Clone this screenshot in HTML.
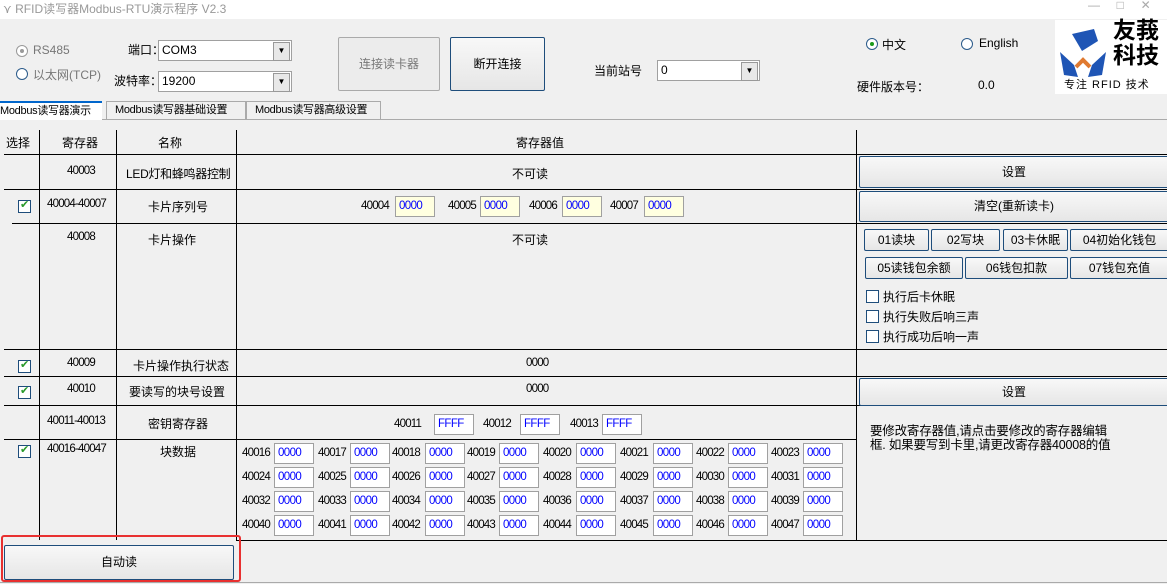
<!DOCTYPE html><html><head><meta charset="utf-8"><style>
*{margin:0;padding:0;box-sizing:border-box}
body{width:1167px;height:584px;overflow:hidden;background:#f0f0f0;font-family:"Liberation Sans","Noto Sans CJK SC",sans-serif;font-size:12px;color:#000;position:relative}
.a{position:absolute;white-space:nowrap}
.n{letter-spacing:-0.8px;font-size:11.5px}
.hl{position:absolute;height:1px;background:#000}
.vl{position:absolute;width:1px;background:#000}
.btn{position:absolute;background:linear-gradient(#f8f8f8,#e6e6e6);border:1px solid #1e4d7b;border-radius:2px;text-align:center;font-size:12px}
.inp{position:absolute;background:#fff;border:1px solid #a0a0a0;color:#00f;padding-left:3px;height:21px;line-height:18px;width:40px;letter-spacing:-0.6px;font-size:11.5px}
.cb{position:absolute;width:13px;height:13px;border:1px solid #1e4d7b;background:#fff}
.cb.on::after{content:"✔";position:absolute;left:1px;top:-3px;color:#2a9a2a;font-size:11px}
.sel{position:absolute;background:#fff;border:1px solid #a0a0a0;height:21px;line-height:19px;padding-left:3px}
.sel::after{content:"▼";position:absolute;right:1px;top:1px;width:15px;height:17px;background:#e8e8e8;border:1px solid #999;font-size:8px;text-align:center;line-height:16px}
.rd{position:absolute;width:12px;height:12px;border:1px solid #2a5a8a;border-radius:50%;background:#fff}
.tab{font-size:11px;letter-spacing:-0.3px}
</style></head><body>
<div class="a" style="left:0;top:0;width:1167px;height:19px;background:#fff"></div>
<div class="a" style="left:3px;top:0;color:#999;font-size:12px">⋎ RFID读写器Modbus-RTU演示程序 V2.3</div>
<div class="a" style="left:1088px;top:-2px;color:#aaa;font-size:12px">—&nbsp;&nbsp;&nbsp;&nbsp;&nbsp;□&nbsp;&nbsp;&nbsp;&nbsp;&nbsp;✕</div>

<div class="rd" style="left:16px;top:45px;border-color:#999"><div style="position:absolute;left:3px;top:3px;width:4px;height:4px;border-radius:50%;background:#999"></div></div>
<div class="a" style="left:33px;top:43px;color:#777">RS485</div>
<div class="rd" style="left:16px;top:68px"></div>
<div class="a" style="left:33px;top:66px;color:#777">以太网(TCP)</div>
<div class="a" style="left:128px;top:41px">端口：</div>
<div class="sel" style="left:158px;top:40px;width:134px;">COM3</div>
<div class="a" style="left:114px;top:72px">波特率：</div>
<div class="sel" style="left:158px;top:71px;width:134px;">19200</div>
<div class="btn" style="left:338px;top:37px;width:102px;height:54px;line-height:52px;border-color:#aaa;color:#777;background:#ececec">连接读卡器</div>
<div class="btn" style="left:450px;top:37px;width:95px;height:54px;line-height:52px;border-color:#1e4d7b">断开连接</div>
<div class="a" style="left:594px;top:62px">当前站号</div>
<div class="sel" style="left:657px;top:60px;width:103px">0</div>
<div class="rd" style="left:866px;top:38px"><div style="position:absolute;left:3px;top:3px;width:4px;height:4px;border-radius:50%;background:#1a9a1a"></div></div>
<div class="a" style="left:882px;top:36px">中文</div>
<div class="rd" style="left:961px;top:38px"></div>
<div class="a" style="left:979px;top:36px">English</div>
<div class="a" style="left:857px;top:78px">硬件版本号：</div>
<div class="a" style="left:978px;top:78px">0.0</div>
<div class="a" style="left:1055px;top:20px;width:112px;height:74px;background:#fff">
<svg width="50" height="50" style="position:absolute;left:3px;top:7px" viewBox="0 0 50 50"><path d="M14 7 L36 2 L40 14 L24 24 Z" fill="#1f55b5"/><path d="M2 25 L16 38 L20 50 L6 48 Z" fill="#1f55b5"/><path d="M48 25 L34 38 L30 50 L44 48 Z" fill="#1f55b5"/><path d="M18 40 L25 33 L32 40" stroke="#e07a30" stroke-width="4" fill="none"/></svg>
<div class="a" style="left:58px;top:-2px;font-size:23px;font-weight:bold;line-height:25px">友莪<br>科技</div>
<div class="a" style="left:9px;top:56px;font-size:11px;letter-spacing:1px">专注 RFID 技术</div>
</div>

<div class="a" style="left:0;top:119px;width:1167px;height:1px;background:#aaa"></div>
<div class="a tab" style="left:0;top:101px;width:102px;height:19px;background:#fff;border-top:2px solid #0066cc;line-height:17px">Modbus读写器演示</div>
<div class="a tab" style="left:106px;top:101px;width:140px;height:18px;border:1px solid #aaa;border-bottom:none;line-height:17px;padding-left:8px;background:#f0f0f0">Modbus读写器基础设置</div>
<div class="a tab" style="left:246px;top:101px;width:135px;height:18px;border:1px solid #aaa;border-bottom:none;line-height:17px;padding-left:8px;background:#f0f0f0">Modbus读写器高级设置</div>

<div class="vl" style="left:39px;top:130px;height:410px"></div>
<div class="vl" style="left:116px;top:130px;height:410px"></div>
<div class="vl" style="left:236px;top:130px;height:410px"></div>
<div class="vl" style="left:856px;top:130px;height:410px"></div>
<div class="hl" style="left:4px;top:154px;width:1163px"></div>
<div class="hl" style="left:4px;top:189px;width:1163px"></div>
<div class="hl" style="left:12px;top:223px;width:1155px"></div>
<div class="hl" style="left:4px;top:349px;width:1163px"></div>
<div class="hl" style="left:4px;top:376px;width:1163px"></div>
<div class="hl" style="left:4px;top:405px;width:1163px"></div>
<div class="hl" style="left:236px;top:439px;width:620px"></div>
<div class="hl" style="left:4px;top:439px;width:232px"></div>
<div class="hl" style="left:236px;top:540px;width:931px"></div>

<div class="a" style="left:6px;top:134px">选择</div>
<div class="a" style="left:62px;top:134px">寄存器</div>
<div class="a" style="left:158px;top:134px">名称</div>
<div class="a" style="left:516px;top:134px">寄存器值</div>

<div class="a n" style="left:67px;top:165px">40003</div>
<div class="a" style="left:126px;top:165px;letter-spacing:-0.3px">LED灯和蜂鸣器控制</div>
<div class="a" style="left:512px;top:165px">不可读</div>
<div class="btn" style="left:859px;top:156px;width:310px;height:32px;line-height:30px">设置</div>

<div class="cb on" style="left:18px;top:200px"></div>
<div class="a n" style="left:47px;top:198px">40004-40007</div>
<div class="a" style="left:148px;top:198px">卡片序列号</div>
<div class="a n" style="left:361px;top:200px">40004</div><div class="inp" style="left:395px;top:196px;background:#ffffe0">0000</div>
<div class="a n" style="left:448px;top:200px">40005</div><div class="inp" style="left:480px;top:196px;background:#ffffe0">0000</div>
<div class="a n" style="left:529px;top:200px">40006</div><div class="inp" style="left:562px;top:196px;background:#ffffe0">0000</div>
<div class="a n" style="left:610px;top:200px">40007</div><div class="inp" style="left:644px;top:196px;background:#ffffe0">0000</div>
<div class="btn" style="left:859px;top:191px;width:310px;height:31px;line-height:29px">清空(重新读卡)</div>

<div class="a n" style="left:67px;top:231px">40008</div>
<div class="a" style="left:148px;top:231px">卡片操作</div>
<div class="a" style="left:512px;top:231px">不可读</div>
<div class="btn" style="left:864px;top:229px;width:65px;height:22px;line-height:20px">01读块</div>
<div class="btn" style="left:931px;top:229px;width:69px;height:22px;line-height:20px">02写块</div>
<div class="btn" style="left:1003px;top:229px;width:65px;height:22px;line-height:20px">03卡休眠</div>
<div class="btn" style="left:1070px;top:229px;width:99px;height:22px;line-height:20px">04初始化钱包</div>
<div class="btn" style="left:865px;top:257px;width:98px;height:22px;line-height:20px">05读钱包余额</div>
<div class="btn" style="left:965px;top:257px;width:103px;height:22px;line-height:20px">06钱包扣款</div>
<div class="btn" style="left:1070px;top:257px;width:99px;height:22px;line-height:20px">07钱包充值</div>
<div class="cb" style="left:866px;top:290px"></div><div class="a" style="left:883px;top:288px">执行后卡休眠</div>
<div class="cb" style="left:866px;top:310px"></div><div class="a" style="left:883px;top:308px">执行失败后响三声</div>
<div class="cb" style="left:866px;top:330px"></div><div class="a" style="left:883px;top:328px">执行成功后响一声</div>

<div class="cb on" style="left:18px;top:360px"></div>
<div class="a n" style="left:67px;top:357px">40009</div>
<div class="a" style="left:133px;top:357px">卡片操作执行状态</div>
<div class="a n" style="left:526px;top:357px">0000</div>

<div class="cb on" style="left:18px;top:386px"></div>
<div class="a n" style="left:67px;top:383px">40010</div>
<div class="a" style="left:129px;top:383px">要读写的块号设置</div>
<div class="a n" style="left:526px;top:383px">0000</div>
<div class="btn" style="left:859px;top:378px;width:310px;height:28px;line-height:26px">设置</div>

<div class="a n" style="left:47px;top:415px">40011-40013</div>
<div class="a" style="left:148px;top:415px">密钥寄存器</div>
<div class="a n" style="left:394px;top:418px">40011</div><div class="inp" style="left:434px;top:414px">FFFF</div>
<div class="a n" style="left:483px;top:418px">40012</div><div class="inp" style="left:520px;top:414px">FFFF</div>
<div class="a n" style="left:570px;top:418px">40013</div><div class="inp" style="left:602px;top:414px">FFFF</div>
<div class="a" style="left:870px;top:424px;font-size:12.5px;line-height:14px;letter-spacing:-0.2px">要修改寄存器值,请点击要修改的寄存器编辑<br>框. 如果要写到卡里,请更改寄存器40008的值</div>

<div class="cb on" style="left:18px;top:445px"></div>
<div class="a n" style="left:47px;top:443px">40016-40047</div>
<div class="a" style="left:160px;top:443px">块数据</div>
<div id="blk"></div>

<div class="btn" style="left:4px;top:545px;width:230px;height:35px;line-height:33px;border-color:#1e4d7b">自动读</div>
<div class="a" style="left:1px;top:535px;width:240px;height:47px;border:2px solid #e83030;border-radius:3px"></div>
<div class="a" style="left:0;top:582px;width:1167px;height:1px;background:#aaa"></div>
<script>
var lx=[242,318,392,467,543,620,696,771],ix=[274,350,425,499,576,653,728,803],ys=[443,467,491,515],h='';
for(var r=0;r<4;r++)for(var c=0;c<8;c++){var n=40016+r*8+c;h+='<div class="a n" style="left:'+lx[c]+'px;top:'+(ys[r]+4)+'px">'+n+'</div><div class="inp" style="left:'+ix[c]+'px;top:'+ys[r]+'px">0000</div>';}
document.getElementById('blk').innerHTML=h;
</script>
</body></html>
